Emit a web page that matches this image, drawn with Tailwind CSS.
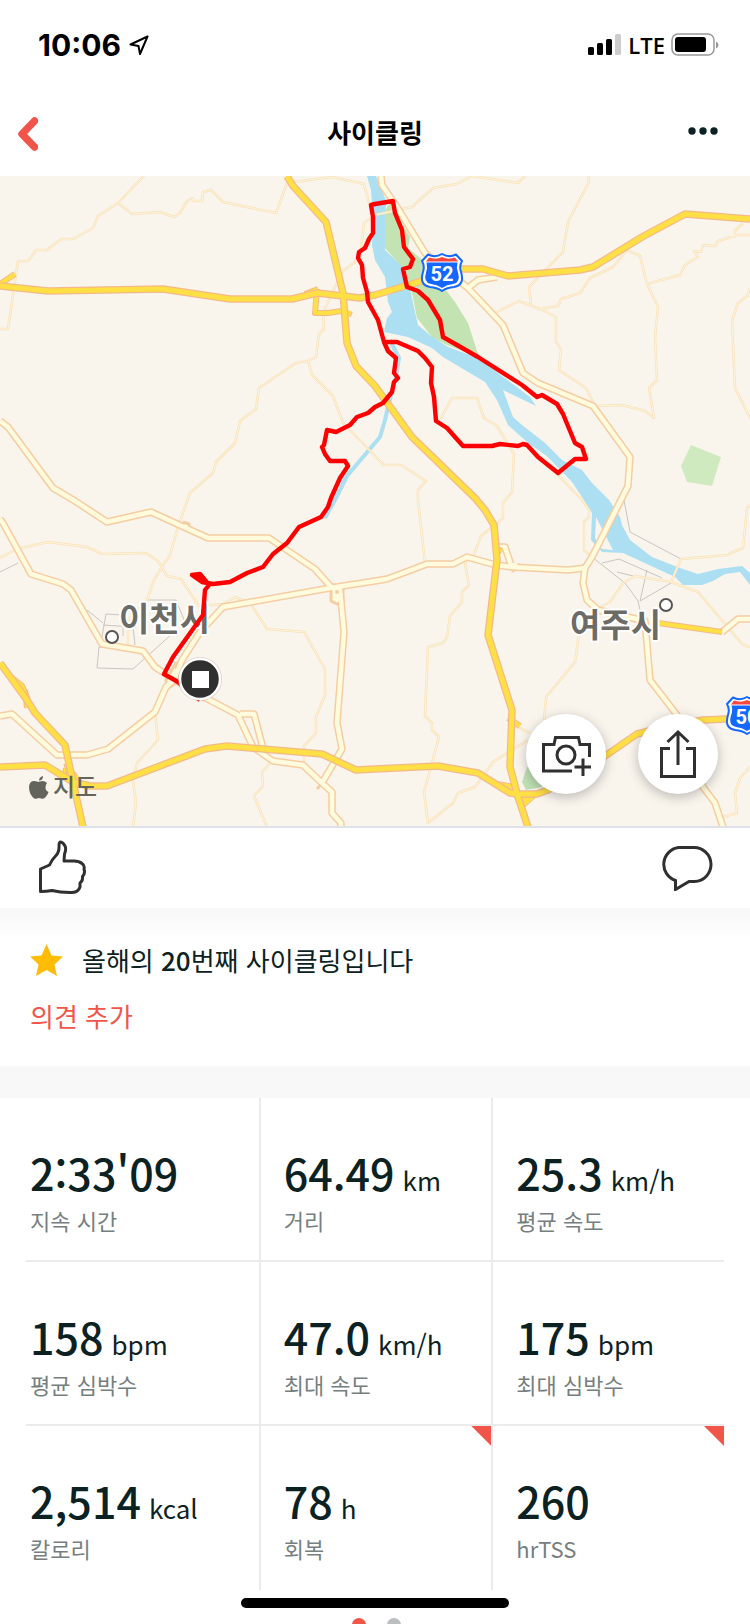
<!DOCTYPE html>
<html lang="ko">
<head>
    <meta charset="UTF-8">
    <meta name="viewport" content="width=device-width, initial-scale=1.0">
    <title>사이클링</title>
    <script src="https://cdn.jsdelivr.net/npm/@tailwindcss/browser@4"></script>
</head>
<body class="bg-white text-[#0c2222] font-['Noto_Sans_CJK_KR',sans-serif]">
    <div class="h-screen overflow-hidden flex flex-col">

        <!-- Status bar -->
        <div class="h-[88px] shrink-0 flex items-center justify-between pt-[2px] pl-[38px] pr-[31px] text-black">
            <div class="flex items-center gap-2">
                <span class="font-['Inter',sans-serif] font-bold text-[30px] leading-8">10:06</span>
                <svg class="w-5 h-5" viewBox="0 0 20 20" fill="none" stroke="currentColor" stroke-width="2" stroke-linejoin="round"><path d="M18.500 1.500 1.500 9.500l8 1.500 1.500 8z"/></svg>
            </div>
            <div class="flex items-center gap-[6px]">
                <svg class="w-[34px] h-[22px]" viewBox="0 0 34 22">
                    <rect x="0" y="13" width="6" height="8" rx="1.500"/>
                    <rect x="9" y="9" width="6" height="12" rx="1.500"/>
                    <rect x="18" y="5" width="6" height="16" rx="1.500"/>
                    <rect x="27" y="0" width="6" height="21" rx="1.500" fill="#cccccc"/>
                </svg>
                <span class="font-['Open_Sans',sans-serif] font-semibold text-[22px] leading-8">LTE</span>
                <svg class="w-12 h-6" viewBox="0 0 48 24">
                    <rect x="1" y="1" width="42" height="21" rx="6" fill="none" stroke="#999" stroke-width="1.500"/>
                    <rect x="4" y="4" width="31" height="15" rx="3"/>
                    <path d="M45 8.500q2.500 1 2.500 3.500t-2.500 3.500z" fill="#999"/>
                </svg>
            </div>
        </div>

        <!-- Nav bar -->
        <header class="h-[88px] shrink-0 grid grid-cols-3 items-center px-[18px]">
            <button type="button" aria-label="뒤로" class="justify-self-start pt-[3px]">
                <svg class="w-5 h-[34px]" viewBox="0 0 20 34" fill="none" stroke="#f1554a" stroke-width="7.500" stroke-linecap="round" stroke-linejoin="round"><path d="M16.500 4 4 17l12.500 13"/></svg>
            </button>
            <h1 class="text-center text-[26px] leading-9 font-bold text-black">사이클링</h1>
            <button type="button" aria-label="더 보기" class="justify-self-end pr-[14px] pb-[3px]">
                <svg class="w-[30px] h-2" viewBox="0 0 30 8" fill="#0c2222"><circle cx="4" cy="4" r="3.700"/><circle cx="15" cy="4" r="3.700"/><circle cx="26" cy="4" r="3.700"/></svg>
            </button>
        </header>

        <!-- Map -->
        <section class="relative h-[652px] shrink-0 bg-[#f9f5ed] border-b-2 border-[#dfe2e9]">
            <svg class="w-full h-full" viewBox="0 176 750 650" preserveAspectRatio="xMidYMid slice" fill="none" stroke-linejoin="round">
                <defs>
                    <g id="shield">
                        <path d="M7 1.500Q14 5 21 1q7 4 14 .5l6 6.500q-3 5-1 11 4 13-7 15-7 .5-12 4-5-3.500-12-4-11-2-7-15 2-6-1-11z" fill="#fff" stroke="#1467ff" stroke-width="2"/>
                        <path d="M5.500 9.500h31q-1.500 5 .5 10 3 10-5 11.500-6 .5-11 4-5-3.500-11-4-8-1.500-5-11.500 2-5 .5-10z" fill="#1467ff"/>
                        <path d="M5 8.500 8 4.500q7 2.500 13-.5 6 3 13 .5l3 4z" fill="#fb463f"/>
                    </g>
                    <!-- every road is drawn twice: casing, then surface -->
                    <g id="minor">
                        <path d="M144 176 118 203 98 216 93 228 73 239H61L47 250H36L28 261H18L8 329H0"/>
                        <path d="M118 203 132 214 160 212 174 217 180 213 187 201 192 198 193 201H202L203 192 211 190 223 202 276 213 287 183 332 177 364 184 371 210"/>
                        <path d="M375 215 364 223 360 258 342 272 323 313 324 329 319 334 316 357 308 361 296 363 259 388 256 409 240 421 235 443 216 462 213 473 190 493 178 527 170 555 162 567 154 580 147 600 128 620V645"/>
                        <path d="M308 361 312 375 333 396 343 423 375 456 384 465H401L426 481 418 490V500L425 563"/>
                        <path d="M0 558 17 549 48 542 87 547 102 554 146 553 158 561 167 576 181 579 199 606 223 604 235 597 250 603 267 629 304 632 325 669V695L316 717V733L304 746V765"/>
                        <path d="M155 712 158 740 137 763 133 780 136 803 133 827M271 762 262 772 263 786 254 796 267 827"/>
                        <path d="M375 215 412 207 433 188 457 184 472 176 518 183 525 176"/>
                        <path d="M588 176 589 182 568 222 563 252 529 287 531 304"/>
                        <path d="M495 313 519 301 540 309 556 317V342L561 349 559 370 586 388 595 406 622 405 645 411 654 418 649 388 657 380 655 337 658 307 647 284 640 256 627 250 613 267 590 278 580 293 561 299 558 306 540 309"/>
                        <path d="M647 284 680 275 685 265 698 257 694 251 701 252 703 245 715 246 718 241 735 236V231L743 223M735 235H750"/>
                        <path d="M750 288 747 296 738 303 732 321 735 388 750 418"/>
                        <path d="M440 420 452 398H477L484 418 497 426 514 454 512 492 503 503V518L481 536 473 557 465 563 469 585 462 592V602L450 616 447 637 443 643 428 647 425 716 432 723V730L439 737 424 792 428 823 453 803 458 793 475 787 493 762 528 740"/>
                        <path d="M558 475 582 500 589 510V517L584 522V550L593 558"/>
                        <path d="M750 505 747 508 743 548 727 555 681 559 671 582 635 576 623 583 610 602 598 608M671 582 698 592 743 645 750 647"/>
                        <path d="M580 627 575 662 546 697 544 720M750 767 740 778 735 793 737 813 723 817M515 726 530 733"/>
                    </g>
                    <g id="secondary">
                        <path d="M0 421 8 427 53 488 75 501 107 522 151 512 208 538H269L315 569 331 587 340 590 344 632 337 723 342 749 322 783"/>
                        <path d="M0 519 3 523 31 574 63 584 71 590 102 644 143 651 155 667 170 677 200 695 238 715 253 747 273 761 303 765 322 783 332 792V813L341 823V827M240 714H254L263 748"/>
                        <path d="M0 716 12 714 57 755H87L108 749 155 712 166 687 174 680 182 660 200 632 223 607 330 588 375 581 387 579 427 564H453L467 557 496 565 512 567 568 570 585 568"/>
                        <path d="M381 176 382 185 397 207 425 253 468 288 503 325 523 373 538 383 593 406 630 457 628 486 592 557 585 568 583 583 587 600 598 610 645 621 650 680 677 715 703 787 715 803 723 827"/>
                        <path d="M468 288 478 280 497 277M497 547H505L512 568M722 632 738 619H750"/>
                    </g>
                    <g id="trunk">
                        <path d="M0 286 48 291 163 289 230 299H292L317 293 343 296 360 298 375 295 422 281 445 269H483L508 276 580 270 593 267 642 237 685 214 750 219"/>
                        <path d="M287 176 293 186 326 222 343 293 347 343 356 366 375 386 412 437 475 498 485 510 494 525 497 560 488 635 512 710 510 767 518 797 528 827"/>
                        <path d="M0 767 45 765 73 782 90 786H107L205 749 227 746 322 754 356 770 375 769 438 766 478 773 510 793 518 794H537L548 790 605 756 637 734 665 727 703 720 750 718"/>
                        <path d="M0 663 27 700 35 713 65 745 73 782 83 827"/>
                    </g>
                </defs>

                <!-- parks and water -->
                <path d="M390 203 410 237 408 248 425 262 455 302 468 323 479 357 447 345 432 337 417 318 412 293 402 267 384 247 385 210z" fill="#c3e4b2"/>
                <path d="M691 445 721 457 712 486 687 482 681 466z" fill="#cfeabf"/>
                <path d="M527 767 522 782 526 790 542 787 550 770z" fill="#bfe0b5"/>
                <path d="M367 176 371 190 373 215 372 245 375 260 385 277 388 302 392 312 387 318 384 332 408 337 432 348 443 357 485 382 497 400 508 425 527 442 548 457 572 482 584 500 592 513 591 540 602 552 623 553 675 577 683 585H702L713 581 725 574 740 572 750 585V573L742 566 718 569 698 574 680 568 652 557 630 540 622 525 620 517 609 500 592 483 582 470 562 460 545 443 522 425 513 417 503 390 536 406 530 397 478 358 448 347 430 335 418 325 413 303 406 270 385 250V210L387 203 376 176z" fill="#abdff1"/>
                <path d="M596 517 613 550 602 549 595 538z" fill="#f9f5ed"/>
                <path d="M390 340 399 358 396 377 388 407 385 420 380 437 347 476 335 500 325 518" stroke="#abdff1" stroke-width="4"/>

                <!-- city streets -->
                <path d="M0 572 18 563M87 610 103 623M101 642 106 614 123 615M103 625 133 627 135 645M123 615V636M110 648 99 647 97 668 133 669 173 633M147 600H176L187 627M624 500 630 532 681 559M592 557 625 583 638 601 641 615M602 563 619 559 662 578M617 572 633 576M647 570 640 601 671 583" stroke="#c9c6c2" stroke-width="1"/>

                <use href="#minor" stroke="#f9e2b8" stroke-width="2.500"/>
                <use href="#minor" stroke="#fcf5e0" stroke-width="1"/>
                <use href="#secondary" stroke="#f5cda3" stroke-width="7.500"/>
                <path d="M331 585h12v16l-6 3-6-3zM166 680l10-17 3 18-12 8zM183 522l6 2v9M507 562l6 9 7-7M317 789l7-8" stroke="#f5cda3" stroke-width="3" fill="#fffbdc"/>
                <use href="#secondary" stroke="#fffbdc" stroke-width="4.500"/>
                <circle cx="337" cy="592" r="2" fill="#f5cda3"/>

                <!-- ramps -->
                <path d="M0 284 15 274M317 289 315 313H328L348 310M305 294 318 289M350 311 348 316M658 623 722 632M25 690 27 708M508 718 520 726M66 768 65 776M494 548 502 551" stroke="#f4b98a" stroke-width="6"/>
                <path d="M0 284 15 274M317 289 315 313H328L348 310M305 294 318 289M350 311 348 316M658 623 722 632M25 690 27 708M508 718 520 726M66 768 65 776M494 548 502 551" stroke="#ffe044" stroke-width="4"/>
                <path d="M494 781 512 784 518 797 526 797 536 797 526 806 522 810 514 796zM5 669 24 684 30 698zM64 764 76 773 84 788 70 784z" fill="#ffe044" stroke="#f4b98a" stroke-width="1"/>
                <use href="#trunk" stroke="#f4b98a" stroke-width="7.500"/>
                <use href="#trunk" stroke="#ffe044" stroke-width="5"/>

                <!-- places -->
                <g font-family="'Noto Sans CJK KR', sans-serif" font-weight="700" font-size="33" fill="#6d6b66" stroke="#fff" stroke-width="4" paint-order="stroke">
                    <text x="119" y="631">이천시</text>
                    <text x="570" y="637">여주시</text>
                </g>
                <g fill="#fff" stroke="#555" stroke-width="2">
                    <circle cx="112" cy="637" r="6"/>
                    <circle cx="666" cy="605" r="6"/>
                </g>
                <use href="#shield" x="421" y="253"/>
                <use href="#shield" x="726" y="696"/>
                <g font-family="Roboto, sans-serif" font-weight="700" font-size="20" fill="#fff" text-anchor="middle">
                    <text x="442" y="281">52</text>
                    <text x="747" y="724">50</text>
                </g>
                <path d="M43 776q-4 1-4 4.500 4 0 4-4.500zM47 783q-3-3-7-1.500-2 .7-4-.2-6-1.300-7 5.200 0 7 4 11 2 2 4 1 2-.8 4 0 3 1 5-2 2-2 2.500-4.500-3-1.500-3-4.500t1.500-4.500z" fill="#63645c"/>
                <text x="53" y="796" font-family="'Noto Sans CJK KR', sans-serif" font-weight="500" font-size="24" fill="#63645c">지도</text>

                <!-- route -->
                <path d="M200 700 178 682 164 674 173 657 203 615 205 590 209 585 200 574 192 575 202 582 213 584 230 582 247 573 263 567 273 554 287 543 299 527 321 517 328 507 331 498 340 478 348 466 345 461H330L325 454 322 447 324 445 327 430 336 432 350 425 357 417 368 413 375 407 383 403 392 392 394 382 398 378 394 373 396 358 388 351 384 342 378 320 368 302 367 292 363 278 362 265 358 258 359 252 365 248 369 239 373 233V217L371 205 375 204 393 201 395 213 402 230 404 247 413 259 410 267 403 269 407 287 418 291 428 300 440 320 443 337 478 357 522 385 537 397 542 395 557 404 563 414 575 443 582 447 586 459H575L558 473 538 457 527 445 523 444 518 446 500 444 492 446H463L447 428 436 421 434 397 431 383 432 367 425 358 418 351 397 342H384" stroke="#f00" stroke-width="4.400"/>
                <path d="M192 575 200 574 209 584z" fill="#f00" stroke="#f00" stroke-width="3"/>
                <circle cx="200" cy="679" r="22" fill="#c9a9a0" opacity=".5"/>
                <circle cx="200" cy="679" r="20" fill="#303030" stroke="#fff" stroke-width="2.500"/>
                <rect x="192" y="671" width="17" height="17" fill="#fff"/>
            </svg>
            <div class="absolute right-8 bottom-8 flex gap-8">
                <button type="button" aria-label="사진 추가" class="size-20 rounded-full bg-white shadow-[0_3px_12px_rgba(0,0,0,0.25)]">
                    <svg class="size-20" viewBox="0 0 80 80" fill="none" stroke="#303030" stroke-width="3"><path d="M46 57H17.500V30.500H28l1.500-7h23l1.500 7h9.500V43"/><circle cx="40" cy="41" r="9"/><path d="M48.500 53H65M57 44.500V62"/></svg>
                </button>
                <button type="button" aria-label="공유" class="size-20 rounded-full bg-white shadow-[0_3px_12px_rgba(0,0,0,0.25)]">
                    <svg class="size-20" viewBox="0 0 80 80" fill="none" stroke="#303030" stroke-width="3"><path d="M32 34.500h-8.500v28h33v-28H48M40 51V18M29.500 28 40 18l10.500 10"/></svg>
                </button>
            </div>
        </section>

        <!-- Reactions -->
        <div class="h-20 shrink-0 flex items-center justify-between pl-[35px] pr-[37px] pb-[2px]">
            <button type="button" aria-label="좋아요">
                <svg class="w-[52px] h-[54px]" viewBox="0 0 52 54" fill="none" stroke="#303030" stroke-width="3" stroke-linejoin="round"><path d="M5.500 29v22.500q6 0 11.500-1 8 2 18 2 8 .5 10-5.500V43q3-2 2.500-6.500 3-3 1.500-7.500 1-3.500-2-5.500-3-2.500-8-2.500H29l.5-7q2-5 .5-8-2-4-5-4-1 1-1 3 .5 7-3 10.500-4 4-6.500 9.500z"/></svg>
            </button>
            <button type="button" aria-label="댓글">
                <svg class="w-[52px] h-[48px]" viewBox="0 0 52 48" fill="none" stroke="#303030" stroke-width="3"><path d="M17.500 4.500h15a17 17 0 0 1 1 34H28L14.500 46.500V37.500A17 17 0 0 1 17.500 4.500z"/></svg>
            </button>
        </div>

        <!-- Summary -->
        <section class="h-[158px] shrink-0 bg-linear-to-b from-[#f8f8f8] to-white to-[32px] pl-[30px] pt-8 text-[26px] leading-10">
            <div class="flex items-center gap-[19px]">
                <svg class="w-[33px] h-8" viewBox="0 0 33 32" fill="#ffbc05"><path d="m16.500 0 5 11.500 11.500 1-8.500 8L27 32l-10.500-6L6 32l2.500-11.500L0 12.500l11.500-1z"/></svg>
                <p>올해의 <span class="font-medium">20</span>번째 사이클링입니다</p>
            </div>
            <a href="#" class="inline-block mt-4 text-[#f1554a]">의견 추가</a>
        </section>
        <div class="h-8 shrink-0 bg-[#f8f8f8]"></div>

        <!-- Stats -->
        <dl class="shrink-0 mx-[26px] grid grid-cols-3 auto-rows-[164px] text-[22px] leading-8 text-[#767f7f] *:flex *:flex-col-reverse *:justify-end *:pt-[42px] *:border-[#ebebeb] [&_dd]:flex [&_dd]:items-baseline [&_dd]:gap-2 [&_dd]:text-[43px] [&_dd]:leading-[64px] [&_dd]:font-medium [&_dd]:text-[#0c2222] [&_small]:text-[26px] [&_small]:leading-8 [&_small]:font-normal">
            <div class="pl-1 border-b-2">
                <dt>지속 시간</dt>
                <dd>2:33'09</dd>
            </div>
            <div class="pl-[23px] border-l-2 border-b-2">
                <dt>거리</dt>
                <dd>64.49 <small>km</small></dd>
            </div>
            <div class="pl-[23px] border-l-2 border-b-2">
                <dt>평균 속도</dt>
                <dd>25.3 <small>km/h</small></dd>
            </div>
            <div class="pl-1 border-b-2">
                <dt>평균 심박수</dt>
                <dd>158 <small>bpm</small></dd>
            </div>
            <div class="pl-[23px] border-l-2 border-b-2">
                <dt>최대 속도</dt>
                <dd>47.0 <small>km/h</small></dd>
            </div>
            <div class="pl-[23px] border-l-2 border-b-2">
                <dt>최대 심박수</dt>
                <dd>175 <small>bpm</small></dd>
            </div>
            <div class="pl-1">
                <dt>칼로리</dt>
                <dd>2,514 <small>kcal</small></dd>
            </div>
            <div class="relative pl-[23px] border-l-2">
                <dt>회복</dt>
                <dd>78 <small>h</small></dd>
                <span class="absolute top-0 right-0 size-5 bg-[#f1554a] [clip-path:polygon(0_0,100%_0,100%_100%)]"></span>
            </div>
            <div class="relative pl-[23px] border-l-2">
                <dt>hrTSS</dt>
                <dd>260</dd>
                <span class="absolute top-0 right-0 size-5 bg-[#f1554a] [clip-path:polygon(0_0,100%_0,100%_100%)]"></span>
            </div>
        </dl>

        <!-- Page dots -->
        <div class="shrink-0 flex justify-center gap-[21px] pt-7 pl-[2px]">
            <span class="size-[14px] rounded-full bg-[#f1554a]"></span>
            <span class="size-[14px] rounded-full bg-[#bbbfbf]"></span>
        </div>
    </div>

    <div class="fixed bottom-4 left-1/2 -translate-x-1/2 w-[268px] h-[10px] rounded-full bg-black"></div>
</body>
</html>
